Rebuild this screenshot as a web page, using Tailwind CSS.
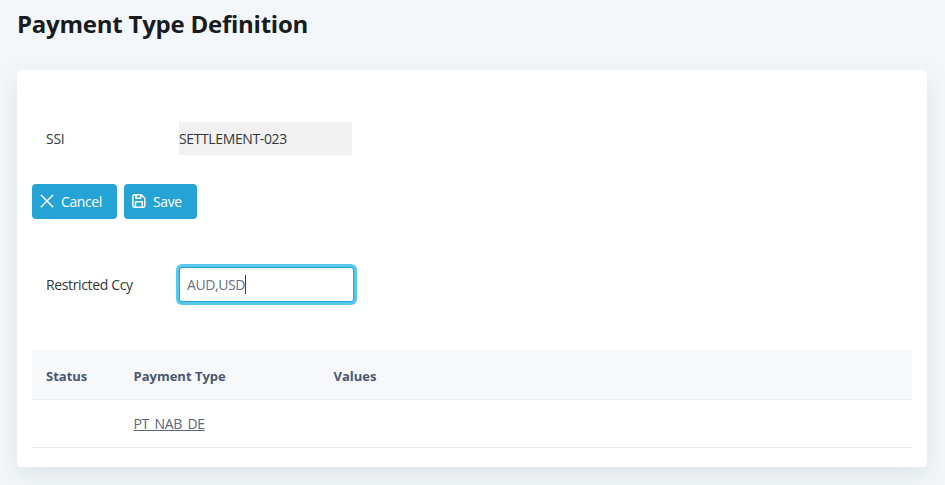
<!DOCTYPE html>
<html lang="en">

<head>
  <meta charset="UTF-8">
  <meta name="viewport" content="width=device-width, initial-scale=1.0">
  <title>Payment Type Definition</title>
  <script src="https://cdn.jsdelivr.net/npm/@tailwindcss/browser@4"></script>
</head>

<body class="h-screen overflow-hidden bg-[#f3f7fa] px-[17px] pt-2 font-['Open_Sans',sans-serif] text-sm text-[#34373a]">

  <h1 class="h-[62px] text-2xl leading-8 font-bold tracking-[-0.24px] whitespace-nowrap text-[#181c1f]">Payment Type Definition</h1>

  <main class="h-[397px] w-[910px] rounded bg-white px-[15px] pt-[52px] shadow-[0_8px_24px_rgba(30,50,50,0.1)]">

    <div class="flex h-[33px] items-center pl-[14px]">
      <span class="w-[133px] pt-px text-sm tracking-[-0.3px]">SSI</span>
      <span class="flex h-full w-[173px] items-center bg-[#f1f1f1] pt-px text-sm tracking-[-0.38px]">SETTLEMENT-023</span>
    </div>

    <div class="mt-[29px] flex gap-[7px] text-white">
      <button class="flex h-[35px] w-[85px] items-center rounded bg-[#26a3d5] pl-2 text-sm tracking-[-0.4px]">
        <svg class="mr-[7px] -mt-px size-[14px]" viewBox="0 0 14 14" fill="none" stroke="currentColor" stroke-width="1.5" stroke-linecap="round">
          <path d="M1.3 1.3l11.4 11.4M12.7 1.3L1.3 12.7" />
        </svg>
        <span class="pt-px">Cancel</span>
      </button>
      <button class="flex h-[35px] w-[73px] items-center rounded bg-[#26a3d5] pl-2 text-sm tracking-[-0.4px]">
        <svg class="mr-[7px] -mt-px size-[14px]" viewBox="0 0 14 14" fill="none" stroke="currentColor" stroke-width="1.5" stroke-linejoin="round">
          <path d="M2.4.8h6.9l3.5 3.5v7.4a1.5 1.5 0 0 1-1.5 1.5H2.4a1.5 1.5 0 0 1-1.5-1.5V2.3A1.5 1.5 0 0 1 2.4.8z" />
          <path d="M4 .9v3.4h4.8V.9M3.5 13V7.8h6.8V13" />
        </svg>
        <span class="pt-px">Save</span>
      </button>
    </div>

    <div class="mt-[48px] flex h-[35px] items-center pl-[14px]">
      <label class="w-[133px] pt-px text-sm tracking-[-0.36px]">Restricted Ccy</label>
      <div class="flex h-[35px] w-[175px] items-center rounded-[3px] border border-[#26a3d5] bg-white pl-[7px] text-sm tracking-[-0.42px] text-[#66718a] ring-[3px] ring-[#57c8e9]">
        <span class="pt-px">AUD,USD</span><span class="h-[19px] w-px bg-[#343d50]"></span>
      </div>
    </div>

    <table class="mt-[48px] w-full table-fixed border-collapse text-left text-[#4b5771]">
      <thead>
        <tr class="h-[49px] border-b border-[#eff0f1] bg-[#f6f8fa] text-[13px]">
          <th class="w-[88px] pt-1 pl-[14px] font-bold">Status</th>
          <th class="w-[200px] pt-1 pl-[13.5px] font-bold">Payment Type</th>
          <th class="pt-1 pl-[13.5px] font-bold">Values</th>
        </tr>
      </thead>
      <tbody>
        <tr class="h-[48px] border-b border-[#e7e8e9]">
          <td></td>
          <td class="pt-0.5 pl-[13.5px] text-sm tracking-[-0.4px] text-[#5b667d]"><a href="#" class="underline">PT_NAB_DE</a></td>
          <td></td>
        </tr>
      </tbody>
    </table>
  </main>

</body>

</html>
